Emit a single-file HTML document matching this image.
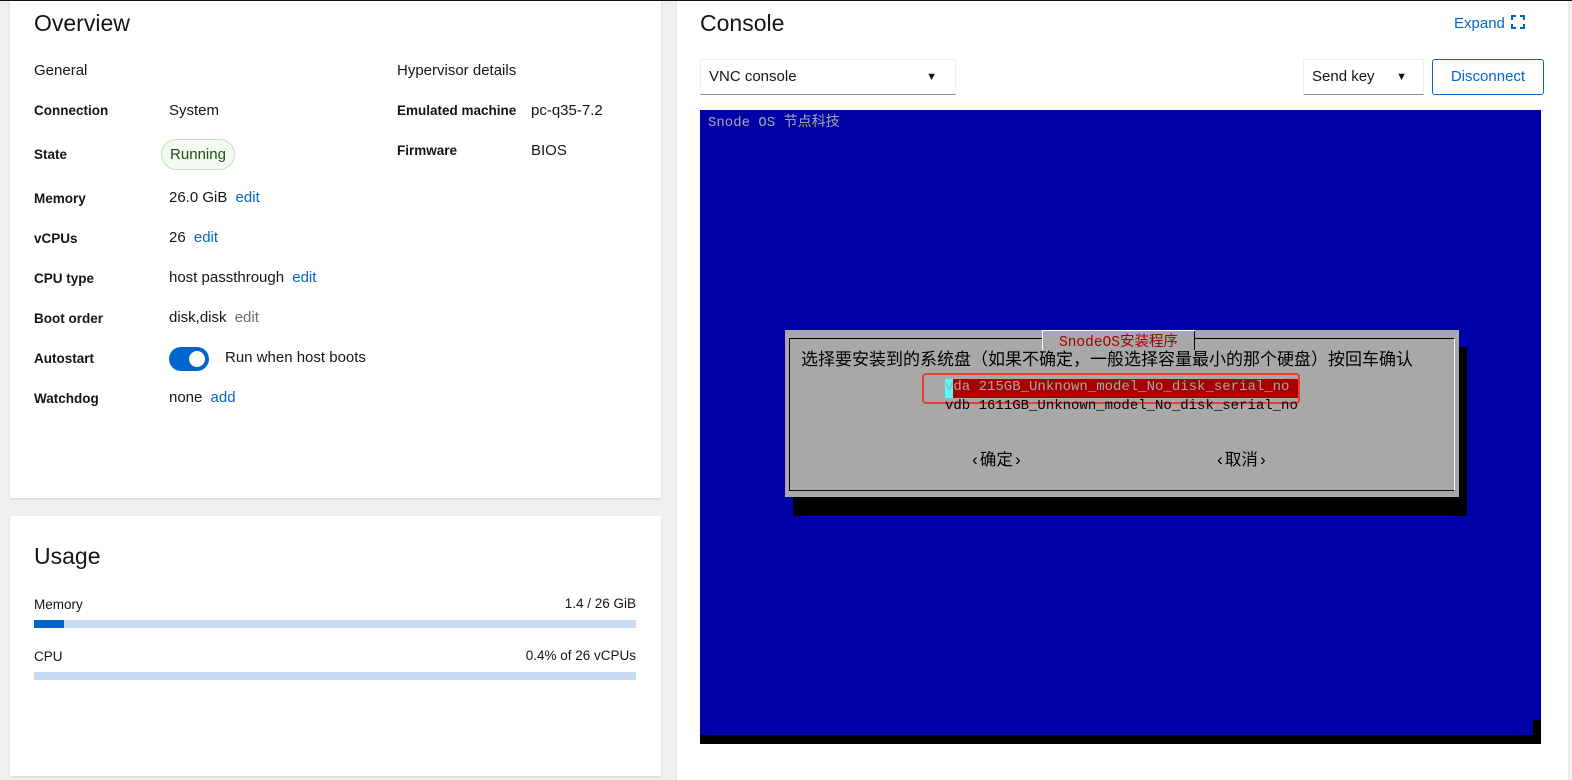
<!DOCTYPE html>
<html><head><meta charset="utf-8"><style>
*{margin:0;padding:0;box-sizing:border-box}
body{width:1572px;height:768px;background:#f0f0f0;position:relative;overflow:hidden;font-family:"Liberation Sans","Noto Sans CJK SC",sans-serif;color:#151515}
.abs{position:absolute}
.card{position:absolute;background:#fff;box-shadow:0 1px 2px rgba(0,0,0,.12)}
h2{font-weight:400;font-size:23px;position:absolute}
.lbl{position:absolute;left:34px;font-size:13.5px;font-weight:700}
.val{position:absolute;left:169px;font-size:15px}
a{color:#0066cc;text-decoration:none}
.mono{font-family:"Liberation Mono","WenQuanYi Zen Hei",monospace;font-size:14px;position:absolute;white-space:pre}
</style></head><body>
<div class="abs" style="left:0;top:0;width:1572px;height:1px;background:#111;z-index:5"></div>
<div class="card" style="left:10px;top:0;width:651px;height:498px"></div>
<div class="card" style="left:10px;top:516px;width:651px;height:260px"></div>
<div class="card" style="left:677px;top:0;width:891px;height:780px"></div>

<h2 style="left:34px;top:10px">Overview</h2>
<div class="abs" style="left:34px;top:62px;font-size:15px">General</div>
<div class="abs" style="left:397px;top:62px;font-size:15px">Hypervisor details</div>
<div class="lbl" style="top:103px">Connection</div><div class="val" style="top:102px">System</div>
<div class="lbl" style="top:147px">State</div>
<div class="abs" style="left:161px;top:139px;width:74px;height:31px;border:1px solid #bde5b8;background:#f3faf2;border-radius:16px;font-size:15px;color:#1e4f18;text-align:center;line-height:29px">Running</div>
<div class="lbl" style="top:191px">Memory</div><div class="val" style="top:189px">26.0 GiB <a style="margin-left:4px">edit</a></div>
<div class="lbl" style="top:231px">vCPUs</div><div class="val" style="top:229px">26 <a style="margin-left:4px">edit</a></div>
<div class="lbl" style="top:271px">CPU type</div><div class="val" style="top:269px">host passthrough <a style="margin-left:4px">edit</a></div>
<div class="lbl" style="top:311px">Boot order</div><div class="val" style="top:309px">disk,disk <span style="color:#6a6e73;margin-left:4px">edit</span></div>
<div class="lbl" style="top:351px">Autostart</div>
<div class="abs" style="left:169px;top:347px;width:40px;height:24px;border-radius:12px;background:#0066cc"><div class="abs" style="left:20px;top:4px;width:16px;height:16px;border-radius:50%;background:#fff"></div></div>
<div class="val" style="left:225px;top:349px">Run when host boots</div>
<div class="lbl" style="top:391px">Watchdog</div><div class="val" style="top:389px">none <a style="margin-left:4px">add</a></div>
<div class="lbl" style="left:397px;top:103px">Emulated machine</div><div class="val" style="left:531px;top:102px">pc-q35-7.2</div>
<div class="lbl" style="left:397px;top:143px">Firmware</div><div class="val" style="left:531px;top:142px">BIOS</div>

<h2 style="left:34px;top:543px">Usage</h2>
<div class="abs" style="left:34px;top:597px;font-size:13.5px">Memory</div>
<div class="abs" style="right:936px;top:596px;font-size:13.5px">1.4 / 26 GiB</div>
<div class="abs" style="left:34px;top:620px;width:602px;height:8px;background:#c7dbf2"><div style="width:30px;height:8px;background:#0066cc"></div></div>
<div class="abs" style="left:34px;top:649px;font-size:13.5px">CPU</div>
<div class="abs" style="right:936px;top:648px;font-size:13.5px">0.4% of 26 vCPUs</div>
<div class="abs" style="left:34px;top:672px;width:602px;height:8px;background:#c7dbf2"></div>

<h2 style="left:700px;top:10px">Console</h2>
<div class="abs" style="left:1454px;top:15px;font-size:15px;color:#0066cc">Expand
<svg width="14" height="14" viewBox="0 0 14 14" style="vertical-align:-1px;margin-left:2px"><path d="M1 5V1h4M9 1h4v4M13 9v4H9M5 13H1V9" fill="none" stroke="#0066cc" stroke-width="2"/></svg></div>
<div class="abs" style="left:700px;top:59px;width:256px;height:36px;border:1px solid #f0f0f0;border-bottom:1px solid #8a8d90;font-size:15px;line-height:34px;padding-left:8px">VNC console<span class="abs" style="right:18px;top:0;font-size:11px">▼</span></div>
<div class="abs" style="left:1303px;top:59px;width:121px;height:36px;border:1px solid #f0f0f0;border-bottom:1px solid #8a8d90;font-size:15px;line-height:34px;padding-left:8px">Send key<span class="abs" style="right:16px;top:0;font-size:11px">▼</span></div>
<div class="abs" style="left:1432px;top:59px;width:112px;height:36px;border:1px solid #0066cc;border-radius:3px;font-size:15px;line-height:34px;text-align:center;color:#0066cc">Disconnect</div>

<div class="abs" style="left:700px;top:110px;width:841px;height:634px;background:#000"></div>
<div class="abs" style="left:700px;top:110px;width:833px;height:625px;background:#0000a8"></div>
<div class="abs" style="left:1533px;top:110px;width:8px;height:610px;background:#0000a8"></div>
<div class="mono" style="left:708px;top:111px;color:#a8a8a8">Snode OS 节点科技</div>
<div class="abs" style="left:793px;top:347px;width:674px;height:169px;background:#000"></div>
<div class="abs" style="left:785px;top:330px;width:674px;height:167px;background:#a8a8a8"></div>
<div class="abs" style="left:789px;top:338px;width:666px;height:153px;border:1px solid #000;border-right-color:#fff;border-bottom-color:#111"></div>
<div class="mono" style="left:1042px;top:330px;width:153px;height:20px;background:#a8a8a8;color:#a80000;border-left:1px solid #fff;border-right:1px solid #000;text-align:center;font-size:14.5px">SnodeOS安装程序</div>
<div class="abs" style="left:1042px;top:330px;width:153px;height:1px;background:#fff"></div>
<div class="mono" style="left:801px;top:345px;color:#000;font-size:17px">选择要安装到的系统盘（如果不确定，一般选择容量最小的那个硬盘）按回车确认</div>
<div class="abs" style="left:945px;top:379px;width:355px;height:19px;background:#a80000"></div>
<div class="abs" style="left:945px;top:379px;width:8px;height:19px;background:#54fcfc"></div>
<div class="mono" style="left:945px;top:379px;color:#a8a8a8">vda 215GB_Unknown_model_No_disk_serial_no</div>
<div class="abs" style="left:922px;top:373px;width:378px;height:31px;border:2px solid #e8402e;border-radius:4px"></div>
<div class="mono" style="left:945px;top:398px;color:#000">vdb 1611GB_Unknown_model_No_disk_serial_no</div>
<div class="mono" style="left:970px;top:446px;color:#000;font-size:16.5px">‹确定›</div>
<div class="mono" style="left:1215px;top:446px;color:#000;font-size:16.5px">‹取消›</div>
</body></html>
